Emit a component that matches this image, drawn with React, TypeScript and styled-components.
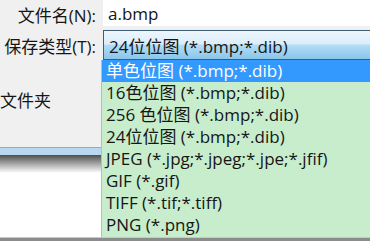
import styled, { createGlobalStyle } from "styled-components";

const GlobalStyle = createGlobalStyle`
  html, body {
    margin: 0;
    padding: 0;
    background: #ffffff;
  }
  body {
    font-family: "Open Sans", "Noto Sans CJK SC", sans-serif;
  }
`;

const uiFont = `"Open Sans", "Noto Sans CJK SC", sans-serif`;

const fileTypes = [
  "单色位图 (*.bmp;*.dib)",
  "16色位图 (*.bmp;*.dib)",
  "256 色位图 (*.bmp;*.dib)",
  "24位位图 (*.bmp;*.dib)",
  "JPEG (*.jpg;*.jpeg;*.jpe;*.jfif)",
  "GIF (*.gif)",
  "TIFF (*.tif;*.tiff)",
  "PNG (*.png)",
];

const Dialog = styled.div`
  position: relative;
  width: 370px;
  height: 241px;
  overflow: hidden;
  display: flex;
  flex-direction: column;
  background: #f0f0f0;
  font-family: ${uiFont};
  font-size: 17px;
  color: #161616;
`;

const FormRow = styled.div<{ $height: number }>`
  display: flex;
  align-items: stretch;
  height: ${(p) => p.$height}px;
  gap: 7px;
`;

const Label = styled.div`
  width: 96px;
  flex-shrink: 0;
  display: flex;
  align-items: center;
  justify-content: flex-end;
  white-space: nowrap;
`;

const TextInput = styled.div`
  flex: 1;
  display: flex;
  align-items: center;
  padding-left: 5px;
  height: 26px;
  background: #ffffff;
`;

const Combo = styled.div`
  flex: 1;
  display: flex;
  align-items: center;
  margin-top: 1px;
  padding-left: 5px;
  height: 28px;
  border: 1px solid #3c5f78;
  border-right: none;
  background: linear-gradient(
    to bottom,
    #edf6fd 0%,
    #dbeefb 45%,
    #b2dbf4 52%,
    #8ac6eb 100%
  );
  white-space: nowrap;
`;

const FolderArea = styled.div`
  height: 86px;
  display: flex;
  flex-direction: column;
  justify-content: flex-start;
  padding-top: 29px;
  box-sizing: border-box;
`;

const FolderLabel = styled.div`
  padding-left: 0;
  line-height: 22px;
`;

const NavBand = styled.div`
  height: 7px;
  border-top: 1px solid #a0a8b0;
  background: #b9d7f1;
`;

const Shadow = styled.div`
  height: 18px;
  background: linear-gradient(to bottom, #4e4e4e 0%, #a0a0a0 45%, #ffffff 100%);
`;

const WhiteArea = styled.div`
  flex: 1;
  background: #ffffff;
`;

const BottomBar = styled.div`
  height: 3px;
  background: #8c8c8c;
  border-top: 1px solid #c8c8c8;
`;

const DropList = styled.ul`
  position: absolute;
  top: 60px;
  left: 101px;
  right: 0;
  height: 177px;
  margin: 0;
  padding: 0;
  list-style: none;
  background: #c7edcc;
  border-left: 1px solid #a8c8ae;
  box-sizing: border-box;
`;

const DropItem = styled.li<{ $selected?: boolean }>`
  height: 22px;
  line-height: 22px;
  padding-left: 4px;
  white-space: nowrap;
  background: ${(p) => (p.$selected ? "#3399ff" : "transparent")};
  color: ${(p) => (p.$selected ? "#ffffff" : "#161616")};
`;

export default function App() {
  return (
    <Dialog>
      <GlobalStyle />
      <FormRow $height={29}>
        <Label>文件名(N):</Label>
        <TextInput>a.bmp</TextInput>
      </FormRow>
      <FormRow $height={32}>
        <Label>保存类型(T):</Label>
        <Combo>24位位图 (*.bmp;*.dib)</Combo>
      </FormRow>
      <FolderArea>
        <FolderLabel>文件夹</FolderLabel>
      </FolderArea>
      <NavBand />
      <Shadow />
      <WhiteArea />
      <BottomBar />
      <DropList>
        {fileTypes.map((t, i) => (
          <DropItem key={t} $selected={i === 0}>
            {t}
          </DropItem>
        ))}
      </DropList>
    </Dialog>
  );
}
